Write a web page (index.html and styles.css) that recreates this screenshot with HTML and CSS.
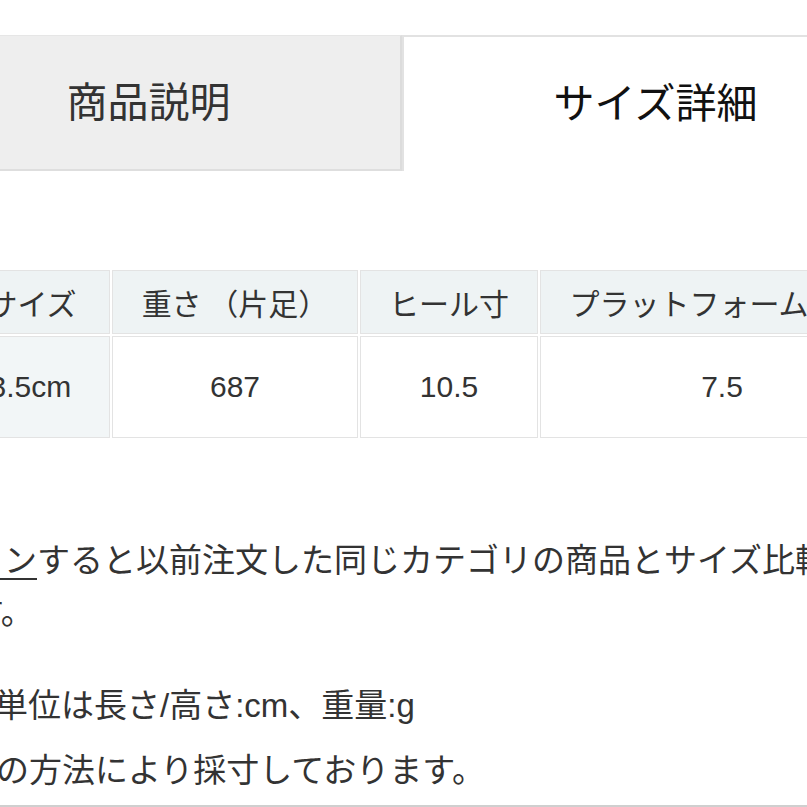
FILE: index.html
```html
<!DOCTYPE html>
<html lang="ja">
<head>
<meta charset="utf-8">
<title>サイズ詳細</title>
<link rel="stylesheet" href="styles.css">
</head>
<body>
<div class="page">
  <div class="tabs">
    <div class="tab tab-inactive">商品説明</div>
    <div class="tab tab-active">サイズ詳細</div>
  </div>

  <table class="size-table">
    <colgroup>
      <col class="c1">
      <col class="c2">
      <col class="c3">
      <col class="c4">
    </colgroup>
    <thead>
      <tr>
        <th class="first">サイズ</th>
        <th>重さ （片足）</th>
        <th>ヒール寸</th>
        <th>プラットフォーム高さ</th>
      </tr>
    </thead>
    <tbody>
      <tr>
        <td class="first">23.5cm</td>
        <td>687</td>
        <td>10.5</td>
        <td>7.5</td>
      </tr>
    </tbody>
  </table>

  <div class="notes">
    <p class="note note-login"><a class="link" href="#">ログイン</a>すると以前注文した同じカテゴリの商品とサイズ比較ができます。</p>
    <p class="note note-unit">サイズ単位は長さ/高さ:cm、重量:g</p>
    <p class="note note-method">※下記の方法により採寸しております。</p>
  </div>
</div>
</body>
</html>
```

FILE: styles.css
```css
html, body {
  margin: 0;
  padding: 0;
  overflow: hidden;
  background: #ffffff;
}

body {
  font-family: "Liberation Sans", "Noto Sans CJK JP", sans-serif;
  color: #333333;
}

.page {
  margin-left: -103px;
  width: 1040px;
  border-bottom: 2px solid #cfcfcf;
  padding-bottom: 8px;
}

.tabs {
  display: flex;
  margin-top: 35px;
}

.tab {
  width: 505px;
  height: 136px;
  box-sizing: border-box;
  display: flex;
  align-items: center;
  justify-content: center;
  padding-bottom: 8px;
  font-size: 41px;
  font-family: "Noto Sans CJK JP", sans-serif;
}

.tab-inactive {
  background: #eeeeee;
  color: #333333;
  border-top: 1px solid #e6e6e6;
  border-right: 2px solid #dcdcdc;
  border-bottom: 2px solid #dedede;
}

.tab-active {
  background: #ffffff;
  color: #111111;
  border-top: 2px solid #e2e2e2;
  border-left: 2px solid #e2e2e2;
}

.size-table {
  margin-top: 97px;
  margin-left: 43px;
  table-layout: fixed;
  width: 966px;
  border-collapse: separate;
  border-spacing: 2px;
  font-size: 30px;
}

.c1 { width: 168px; }
.c2 { width: 246px; }
.c3 { width: 178px; }
.c4 { width: 364px; }

.size-table th,
.size-table td {
  box-sizing: border-box;
  border: 1px solid #e3e3e3;
  text-align: center;
  white-space: nowrap;
  overflow: hidden;
  padding: 0;
  color: #333333;
}

.size-table th {
  height: 64px;
  background: #eef3f4;
  font-weight: normal;
  font-family: "Noto Sans CJK JP", sans-serif;
  font-size: 30px;
}

.size-table th.first {
  padding-left: 12px;
}

.size-table td {
  height: 102px;
  background: #ffffff;
}

.size-table td.first {
  background: #f2f6f7;
  padding-right: 8px;
}

.size-table th:last-child {
  padding-right: 6px;
}

.notes {
  margin-top: 95px;
  font-size: 33px;
}

.note {
  margin: 0;
  line-height: 52px;
  white-space: normal;
}

.note-login {
  margin-left: 8px;
  width: 1005px;
  margin-bottom: 41px;
}

.note-unit {
  margin-bottom: 13px;
}

.link {
  color: #333333;
  text-decoration: underline;
  text-decoration-thickness: 2px;
  text-underline-offset: 6px;
}
```
